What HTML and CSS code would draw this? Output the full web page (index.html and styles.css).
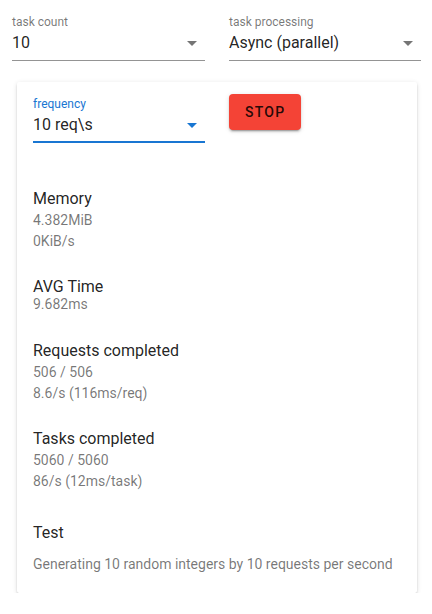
FILE: index.html
```html
<!DOCTYPE html>
<html>
<head>
<meta charset="utf-8">
<link rel="stylesheet" href="styles.css">
</head>
<body>
<div class="page">
  <div class="top-row">
    <div class="select">
      <div class="select-label">task count</div>
      <div class="select-field">
        <span class="select-value">10</span>
        <svg class="arrow" width="24" height="24" viewBox="0 0 24 24"><path d="M7 10l5 5 5-5z"/></svg>
      </div>
    </div>
    <div class="select">
      <div class="select-label">task processing</div>
      <div class="select-field">
        <span class="select-value">Async (parallel)</span>
        <svg class="arrow" width="24" height="24" viewBox="0 0 24 24"><path d="M7 10l5 5 5-5z"/></svg>
      </div>
    </div>
  </div>

  <div class="card">
    <div class="card-head">
      <div class="select select-focused">
        <div class="select-label">frequency</div>
        <div class="select-field">
          <span class="select-value">10 req\s</span>
          <svg class="arrow" width="24" height="24" viewBox="0 0 24 24"><path d="M7 10l5 5 5-5z"/></svg>
        </div>
      </div>
      <div class="btn-wrap">
        <button class="btn-stop">STOP</button>
      </div>
    </div>

    <div class="stat stat-memory">
      <div class="stat-title">Memory</div>
      <div class="stat-line">4.382MiB</div>
      <div class="stat-line">0KiB/s</div>
    </div>

    <div class="stat stat-avg">
      <div class="stat-title">AVG Time</div>
      <div class="stat-line">9.682ms</div>
    </div>

    <div class="stat stat-requests">
      <div class="stat-title">Requests completed</div>
      <div class="stat-line">506 / 506</div>
      <div class="stat-line">8.6/s (116ms/req)</div>
    </div>

    <div class="stat stat-tasks">
      <div class="stat-title">Tasks completed</div>
      <div class="stat-line">5060 / 5060</div>
      <div class="stat-line">86/s (12ms/task)</div>
    </div>

    <div class="stat stat-test">
      <div class="stat-title">Test</div>
      <div class="stat-desc">Generating 10 random integers by 10 requests per second</div>
    </div>
  </div>
</div>
</body>
</html>
```

FILE: styles.css
```css
html, body {
  margin: 0;
  padding: 0;
  background: #ffffff;
}

body {
  font-family: Roboto, "Liberation Sans", Arial, sans-serif;
  color: rgba(0, 0, 0, 0.87);
}

.page {
  width: 432px;
}

.top-row {
  display: grid;
  grid-template-columns: 193px 192px;
  column-gap: 24px;
  padding: 14px 11px 0 12px;
}

.select {
  display: flex;
  flex-direction: column;
}

.select-label {
  font-size: 12px;
  line-height: 16px;
  height: 16px;
  color: rgba(0, 0, 0, 0.54);
  white-space: nowrap;
}

.select-field {
  display: flex;
  align-items: flex-start;
  justify-content: space-between;
  height: 29px;
  padding-top: 1px;
  border-bottom: 1px solid rgba(0, 0, 0, 0.42);
}

.select-value {
  font-size: 16px;
  line-height: 24px;
  white-space: nowrap;
}

.arrow {
  display: block;
  margin-right: 1px;
  fill: rgba(0, 0, 0, 0.54);
}

.select-focused .select-label {
  color: #1976d2;
}

.select-focused .select-field {
  height: 28px;
  border-bottom: 2px solid #1976d2;
}

.select-focused .arrow {
  fill: #1976d2;
}

.card {
  width: 368px;
  margin: 21px 0 0 17px;
  padding: 0 16px 18px 16px;
  background: #ffffff;
  border-radius: 2px;
  box-shadow: 0 3px 1px -2px rgba(0, 0, 0, 0.2),
              0 2px 2px 0 rgba(0, 0, 0, 0.14),
              0 1px 5px 0 rgba(0, 0, 0, 0.12);
}

.card-head {
  display: grid;
  grid-template-columns: 172px auto;
  column-gap: 24px;
  align-items: start;
  padding-top: 14px;
}

.btn-wrap {
  margin-top: -2px;
}

.btn-stop {
  display: block;
  height: 36px;
  min-width: 64px;
  padding: 0 16px;
  border: none;
  border-radius: 4px;
  background: #f44336;
  color: rgba(0, 0, 0, 0.87);
  font-family: Roboto, "Liberation Sans", Arial, sans-serif;
  font-size: 14px;
  font-weight: 500;
  letter-spacing: 1.25px;
  text-transform: uppercase;
  box-shadow: 0 3px 1px -2px rgba(0, 0, 0, 0.2),
              0 2px 2px 0 rgba(0, 0, 0, 0.14),
              0 1px 5px 0 rgba(0, 0, 0, 0.12);
}

.stat-title {
  font-size: 16px;
  line-height: 22px;
  color: rgba(0, 0, 0, 0.87);
}

.stat-line {
  font-size: 14px;
  line-height: 21px;
  color: rgba(0, 0, 0, 0.54);
}

.stat-memory {
  margin-top: 45px;
}

.stat-avg {
  margin-top: 26px;
}

.stat-avg .stat-title {
  line-height: 18px;
}

.stat-avg .stat-line {
  line-height: 17px;
}

.stat-requests {
  margin-top: 27px;
}

.stat-tasks {
  margin-top: 24px;
}

.stat-test {
  margin-top: 30px;
}

.stat-desc {
  margin-top: 10px;
  font-size: 14px;
  line-height: 21px;
  color: rgba(0, 0, 0, 0.54);
  white-space: nowrap;
}
```
